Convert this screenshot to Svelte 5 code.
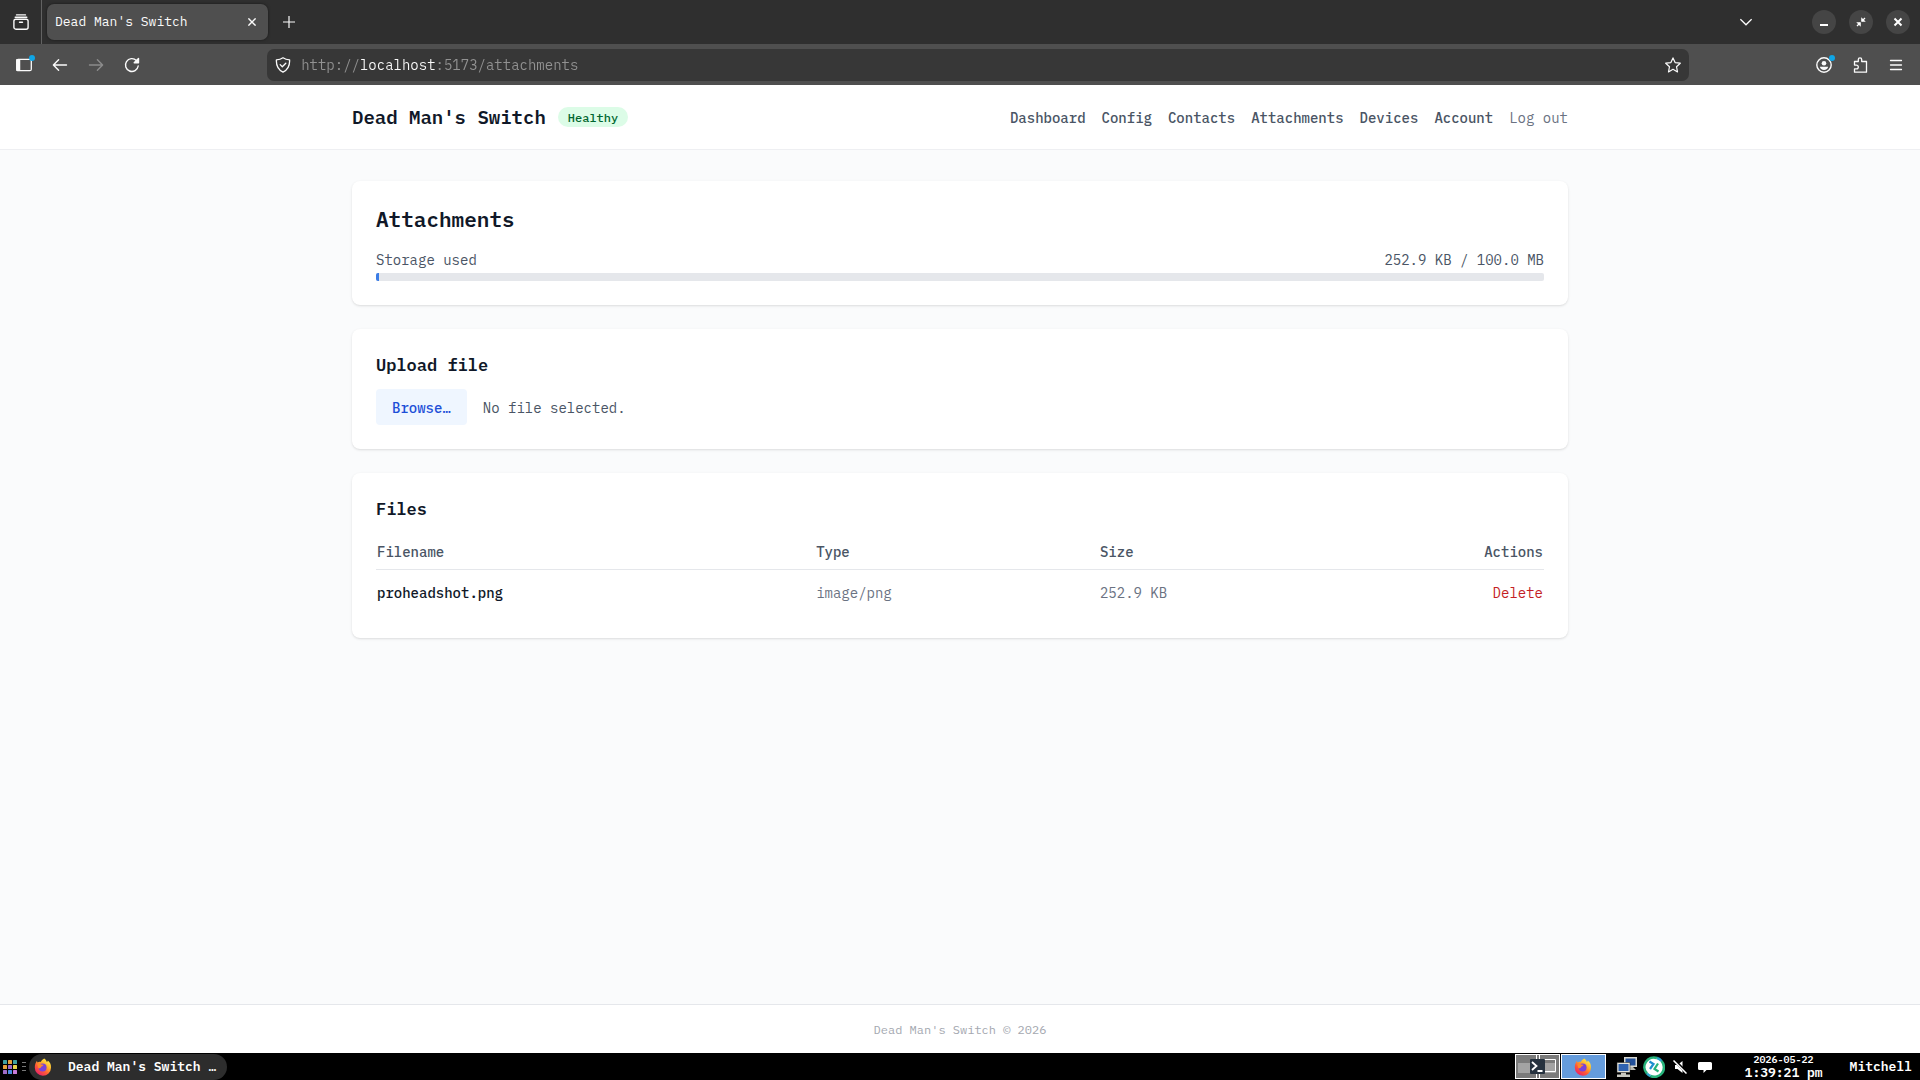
<script lang="ts">
  interface StoredFile {
    id: number;
    name: string;
    type: string;
    size: number;
  }

  const QUOTA = 100 * 1024 * 1024;

  const links = [
    "Dashboard",
    "Config",
    "Contacts",
    "Attachments",
    "Devices",
    "Account",
  ];

  // colours of the 3x3 launcher grid, row by row
  const launcher = [
    "#3fa0a0", "#e8a23a", "#3fa0a0",
    "#e8a23a", "#a06cc8", "#e8d44a",
    "#a06cc8", "#4a8ae0", "#c87ad8",
  ];

  let files = $state<StoredFile[]>([
    { id: 1, name: "proheadshot.png", type: "image/png", size: 258970 },
  ]);
  let picked = $state("");
  let address = $state("http://localhost:5173/attachments");

  const used = $derived(files.reduce((sum, f) => sum + f.size, 0));
  const percent = $derived((used / QUOTA) * 100);

  function formatSize(bytes: number) {
    if (bytes >= 1024 * 1024) return `${(bytes / 1024 / 1024).toFixed(1)} MB`;
    return `${(bytes / 1024).toFixed(1)} KB`;
  }

  function pick(e: Event) {
    const input = e.currentTarget as HTMLInputElement;
    picked = input.files?.[0]?.name ?? "";
  }

  function remove(id: number) {
    files = files.filter((f) => f.id !== id);
  }
</script>

{#snippet firefox()}
  <svg class="fox" width="18" height="18" viewBox="0 0 18 18" aria-hidden="true">
    <defs>
      <linearGradient id="fox-fire" x1="0.85" y1="0.05" x2="0.2" y2="0.95">
        <stop offset="0" stop-color="#fff14a" />
        <stop offset="0.35" stop-color="#ffb02a" />
        <stop offset="0.65" stop-color="#ff5a36" />
        <stop offset="1" stop-color="#e8206a" />
      </linearGradient>
    </defs>
    <path
      fill="url(#fox-fire)"
      d="M10.2 0.6c1.6 1 2.3 2.4 2.6 3.4 .7-.2 1-.8 1-1.4 2.300 1.700 3.400 4.200 3.200 7.200A8.100 8.100 0 0 1 .8 9.600C.8 6.900 1.600 4.600 3 2.800c0 .7.200 1.200.600 1.700 1-.7 2.200-.8 3.200-.5C7.400 2.500 8.600 1.600 10.200.6z"
    />
    <circle cx="8.6" cy="9.6" r="4" fill="#7a42d8" />
    <path
      fill="#ff8a2a"
      d="M3.400 6.200c1.400-.7 3-.4 4 .3l2 .2c.3.9-1 1.400-2 1.700-.4 1.600-1.800 2.200-3.200 1.600z"
    />
  </svg>
{/snippet}

<div class="screen">
  <header class="browser">
    <div class="tabstrip">
      <button class="icon view" aria-label="Recent browsing">
        <svg width="16" height="16" viewBox="0 0 16 16" fill="none" stroke="#fbfbfb" stroke-width="1.4" stroke-linecap="round">
          <path d="M3.500 .9h9M2.200 3.200h11.600" />
          <rect x="0.900" y="5.200" width="14.200" height="10" rx="2" />
          <path d="M6.500 8.300h3" />
        </svg>
      </button>
      <div class="tab">
        <span>Dead Man's Switch</span>
        <button class="icon" aria-label="Close tab">
          <svg width="8" height="8" viewBox="0 0 8 8" stroke="#fbfbfb" stroke-width="1.4">
            <path d="M.4.4l7.200 7.200M7.600.4L.4 7.600" />
          </svg>
        </button>
      </div>
      <button class="icon new" aria-label="New tab">
        <svg width="12" height="12" viewBox="0 0 12 12" stroke="#fbfbfb" stroke-width="1.200">
          <path d="M6 0v12M0 6h12" />
        </svg>
      </button>
      <button class="icon all" aria-label="List all tabs">
        <svg width="12" height="12" viewBox="0 0 12 12" fill="none" stroke="#fbfbfb" stroke-width="1.300">
          <path d="M.4 3.200L6 8.800l5.600-5.600" />
        </svg>
      </button>
      <div class="window-buttons">
        <button aria-label="Minimize">
          <svg width="10" height="10" viewBox="0 0 10 10"><path fill="#fff" d="M1 7h8v2H1z" /></svg>
        </button>
        <button aria-label="Restore">
          <svg width="10" height="10" viewBox="0 0 10 10" fill="#fff" stroke="#fff" stroke-width="1.300">
            <path d="M5.900 1.800v2.300h2.300zM4.100 8.200V5.900H1.800z" />
            <path d="M6 4l3-3M4 6L1 9" />
          </svg>
        </button>
        <button aria-label="Close window">
          <svg width="10" height="10" viewBox="0 0 10 10" stroke="#fff" stroke-width="2"><path d="M1.500 1.500l7 7M8.500 1.500l-7 7" /></svg>
        </button>
      </div>
    </div>

    <div class="toolbar">
      <div class="tools">
        <button class="icon dot" aria-label="Sidebar">
          <svg width="16" height="16" viewBox="0 0 16 16" fill="none" stroke="#fbfbfb" stroke-width="1.300">
            <rect x="0.700" y="2.300" width="14.600" height="11.400" rx="1.500" />
            <path fill="#fbfbfb" d="M1 2.600h2.600v10.800H1z" />
          </svg>
        </button>
        <button class="icon" aria-label="Back">
          <svg width="16" height="16" viewBox="0 0 16 16" fill="none" stroke="#fbfbfb" stroke-width="1.400" stroke-linecap="round" stroke-linejoin="round">
            <path d="M14.500 8h-13M6.600 2.700L1.400 8l5.200 5.300" />
          </svg>
        </button>
        <button class="icon" aria-label="Forward" disabled>
          <svg width="16" height="16" viewBox="0 0 16 16" fill="none" stroke="#8c8c8c" stroke-width="1.400" stroke-linecap="round" stroke-linejoin="round">
            <path d="M1.500 8h13M9.400 2.700L14.600 8l-5.200 5.300" />
          </svg>
        </button>
        <button class="icon" aria-label="Reload">
          <svg width="16" height="16" viewBox="0 0 16 16" fill="none" stroke="#fbfbfb" stroke-width="1.400" stroke-linecap="round">
            <path d="M14.200 9A6.400 6.400 0 1 1 12.400 3.500L14 5" />
            <path fill="#fbfbfb" stroke-linejoin="round" d="M14.500 1.400v4.300h-4.300z" />
          </svg>
        </button>
      </div>
      <div class="address">
        <svg width="16" height="16" viewBox="0 0 16 16" fill="none" stroke="#fbfbfb" stroke-width="1.300" stroke-linecap="round" stroke-linejoin="round" aria-hidden="true">
          <path d="M8 .8c1.800 1.300 4 2 6.600 2.100.3 5.200-1.500 9.800-6.600 12.300C2.900 12.700 1.100 8.100 1.400 2.900 4 2.800 6.200 2.100 8 .8z" />
          <path d="M5.200 7.600l2.100 2.100 3.500-3.500" />
        </svg>
        <input type="text" aria-label="Address" spellcheck="false" bind:value={address} />
        <button class="icon" aria-label="Bookmark this page">
          <svg width="16" height="16" viewBox="0 0 16 16" fill="none" stroke="#fbfbfb" stroke-width="1.200" stroke-linejoin="round">
            <path d="M8 .9l2.100 4.700 5.200.6-3.800 3.500 1 5.200L8 12.300l-4.500 2.600 1-5.200L.7 6.200l5.200-.6z" />
          </svg>
        </button>
      </div>
      <div class="tools">
        <button class="icon dot" aria-label="Profile">
          <svg width="16" height="16" viewBox="0 0 16 16" fill="none" stroke="#fbfbfb" stroke-width="1.400">
            <circle cx="8" cy="8" r="7.200" />
            <circle cx="8" cy="6.200" r="2.300" fill="#fbfbfb" stroke="none" />
            <path fill="#fbfbfb" stroke="none" d="M3.900 9.700h8.200c0 2-2 3.200-4.100 3.200s-4.100-1.200-4.100-3.200z" />
          </svg>
        </button>
        <button class="icon" aria-label="Extensions">
          <svg width="16" height="16" viewBox="0 0 16 16" fill="none" stroke="#fbfbfb" stroke-width="1.300" stroke-linejoin="round">
            <path d="M2.500 4.500h3.800V2.600a1.700 1.700 0 0 1 3.400 0v1.900h4.800v10.700h-12v-3.300h1.900a1.900 1.900 0 0 0 0-3.800H2.500z" />
          </svg>
        </button>
        <button class="icon" aria-label="Application menu">
          <svg width="16" height="16" viewBox="0 0 16 16" stroke="#fbfbfb" stroke-width="1.300" stroke-linecap="round">
            <path d="M2.500 3.500h11M2.500 8h11M2.500 12.500h11" />
          </svg>
        </button>
      </div>
    </div>
  </header>

  <div class="page">
    <div class="site-header">
      <div class="container bar">
        <div class="brand">
          <a class="title" href="/">Dead Man's Switch</a>
          <span class="badge">Healthy</span>
        </div>
        <nav>
          {#each links as link}
            <a href="/{link.toLowerCase()}">{link}</a>
          {/each}
          <button class="logout">Log out</button>
        </nav>
      </div>
    </div>

    <main class="container">
      <section class="card">
        <h1>Attachments</h1>
        <div class="usage">
          <span>Storage used</span>
          <span>{formatSize(used)} / {formatSize(QUOTA)}</span>
        </div>
        <div class="meter" role="progressbar" aria-label="Storage used" aria-valuenow={percent}>
          <div class="fill" style="width: {percent}%"></div>
        </div>
      </section>

      <section class="card">
        <h2>Upload file</h2>
        <label class="upload">
          <input type="file" onchange={pick} />
          <span class="browse">Browse…</span>
          <span class="picked">{picked || "No file selected."}</span>
        </label>
      </section>

      <section class="card">
        <h2 class="roomy">Files</h2>
        <table>
          <thead>
            <tr>
              <th class="name">Filename</th>
              <th class="type">Type</th>
              <th>Size</th>
              <th class="actions">Actions</th>
            </tr>
          </thead>
          <tbody>
            {#each files as file (file.id)}
              <tr>
                <td class="filename">{file.name}</td>
                <td>{file.type}</td>
                <td>{formatSize(file.size)}</td>
                <td class="actions">
                  <button class="delete" onclick={() => remove(file.id)}>Delete</button>
                </td>
              </tr>
            {/each}
          </tbody>
        </table>
      </section>
    </main>

    <footer>Dead Man's Switch © 2026</footer>
  </div>

  <div class="taskbar">
    <button class="icon" aria-label="Applications">
      <svg width="14" height="14" viewBox="0 0 14 14">
        {#each launcher as color, i}
          <rect x={(i % 3) * 5} y={Math.floor(i / 3) * 5} width="4" height="4" rx="0.500" fill={color} />
        {/each}
      </svg>
    </button>
    <svg class="grip" width="4" height="10" viewBox="0 0 4 10" stroke="#777" aria-hidden="true">
      <path d="M0 .5h4M0 4.500h4M0 8.500h4" />
    </svg>
    <button class="task">
      {@render firefox()}
      <span>Dead Man's Switch …</span>
    </button>

    <div class="tray">
      <div class="pager">
        <button class="desk" aria-label="Workspace 1">
          <svg width="42" height="23" viewBox="0 0 42 23">
            <path fill="#a3a3a3" d="M2 8h38v10H2z" />
            <path fill="none" stroke="#fff" d="M20.500 0v23M23.500 0v23M24 4.500h15.500v12H24" />
            <rect x="14" y="4" width="15" height="15" rx="1" fill="#26323f" />
            <path fill="none" stroke="#fff" stroke-width="1.800" d="M16 7l4.500 4-4.500 4M21.500 16h5" />
          </svg>
        </button>
        <button class="desk active" aria-label="Workspace 2">
          {@render firefox()}
        </button>
      </div>
      <div class="status">
        <svg width="22" height="20" viewBox="0 0 22 20" aria-hidden="true">
          <path fill="#d8d8d0" d="M8 0h13v10H8z" />
          <path fill="#22509a" d="M9.500 1.500h10v7h-10z" />
          <path fill="#b8b8b0" d="M12 10h5l3 3h-6z" />
          <path fill="#e4e4dc" stroke="#222" stroke-width="0.500" d="M1 5.500h13v10H1z" />
          <path fill="#2f62b0" d="M2.500 7h10v7h-10z" />
          <path fill="#c8c8c0" d="M5 15.800h5v1.700H5zM1 17.500h13V20H1z" />
        </svg>
        <svg width="22" height="22" viewBox="0 0 22 22" aria-hidden="true">
          <circle cx="11" cy="11" r="9.500" fill="#fff" />
          <path fill="none" stroke="#27b37b" stroke-width="2.600" d="M4 17.500A9.500 9.500 0 0 1 14 2M18.500 5A9.500 9.500 0 0 1 7.500 20" />
          <path fill="none" stroke="#2aa5c8" stroke-width="2.600" d="M14 2a9.500 9.500 0 0 1 4.500 3M7.500 20A9.500 9.500 0 0 1 4 17.500" />
          <path fill="none" stroke="#1f8fd0" stroke-width="2.200" d="M6.500 5.500l4 2.500-3.500 5" />
          <path fill="none" stroke="#27b37b" stroke-width="2.200" d="M15 7.500L11.500 13l4 2.500" />
        </svg>
        <svg width="20" height="14" viewBox="-3 0 20 14" aria-hidden="true">
          <path fill="#fff" d="M2 5h2.500L9.500 1v12L4.500 9H2z" />
          <path stroke="#000" stroke-width="3" d="M1.500.5l12 12" />
          <path stroke="#fff" stroke-width="1.500" d="M.5.5l13 13" />
        </svg>
        <svg width="20" height="14" viewBox="-3 0 20 14" aria-hidden="true">
          <path fill="#fff" d="M1.500 2h11A1.500 1.500 0 0 1 14 3.500v5a1.500 1.500 0 0 1-1.500 1.500H8.500L5.500 13v-3h-4A1.500 1.500 0 0 1 0 8.500v-5A1.500 1.500 0 0 1 1.500 2z" />
        </svg>
      </div>
      <div class="clock">
        <span class="date">2026-05-22</span>
        <span>1:39:21 pm</span>
      </div>
      <span class="user">Mitchell</span>
    </div>
  </div>
</div>

<style>
  :global(body) {
    margin: 0;
  }

  .screen {
    display: flex;
    flex-direction: column;
    min-height: 100vh;
    font-family: "IBM Plex Mono", "Liberation Mono", monospace;
    font-size: 14px;
    line-height: 20px;
  }

  button,
  input {
    font: inherit;
  }

  button {
    margin: 0;
    padding: 0;
    border: 0;
    background: none;
    color: inherit;
    cursor: pointer;
  }

  a {
    color: inherit;
    text-decoration: none;
  }

  svg {
    display: block;
    flex-shrink: 0;
  }

  .icon {
    display: flex;
    align-items: center;
    justify-content: center;
  }

  /* browser window */

  .tabstrip {
    display: flex;
    align-items: center;
    height: 44px;
    background: #2f2f2f;
    color: #fbfbfb;
  }

  .view {
    width: 42px;
    height: 44px;
    border-right: 1px solid #626262;
  }

  .tab {
    display: flex;
    align-items: center;
    justify-content: space-between;
    box-sizing: border-box;
    width: 221px;
    height: 36px;
    margin-left: 5px;
    padding: 0 12px 0 8px;
    border-radius: 7px;
    background: #4f4f4f;
    box-shadow: 0 0 3px rgba(0, 0, 0, 0.5);
    font-size: 13px;
  }

  .new {
    margin-left: 15px;
  }

  .all {
    margin-left: auto;
  }

  .window-buttons {
    display: flex;
    gap: 13px;
    margin: 0 10px 0 60px;
  }

  .window-buttons button {
    display: flex;
    align-items: center;
    justify-content: center;
    width: 24px;
    height: 24px;
    border-radius: 50%;
    background: #454545;
  }

  .toolbar {
    display: flex;
    align-items: center;
    justify-content: space-between;
    height: 41px;
    padding: 0 16px;
    background: #4f4f4f;
  }

  .tools {
    display: flex;
    gap: 20px;
  }

  .dot {
    position: relative;
  }

  .dot::after {
    content: "";
    position: absolute;
    top: -2px;
    right: -3px;
    width: 6px;
    height: 6px;
    border-radius: 50%;
    background: #0fa5e6;
  }

  .address {
    display: flex;
    align-items: center;
    gap: 10px;
    box-sizing: border-box;
    width: 75.3%;
    height: 32px;
    padding: 0 8px;
    border-radius: 7px;
    background: #373737;
  }

  /* only the host part of the address is drawn in white */
  .address input {
    flex: 1;
    min-width: 0;
    padding: 0;
    border: 0;
    outline: none;
    background: linear-gradient(
      to right,
      #929292 7ch,
      #fbfbfb 7ch,
      #fbfbfb 16ch,
      #929292 16ch
    );
    background-clip: text;
    -webkit-background-clip: text;
    color: transparent;
    caret-color: #fbfbfb;
  }

  /* page */

  .page {
    display: flex;
    flex: 1;
    flex-direction: column;
    background: #fafbfc;
    color: #4a5565;
  }

  .container {
    box-sizing: border-box;
    width: 100%;
    max-width: 1280px;
    margin: 0 auto;
    padding: 0 32px;
  }

  .site-header {
    border-bottom: 1px solid #eeeff2;
    background: #fff;
  }

  .bar {
    display: flex;
    align-items: center;
    justify-content: space-between;
    height: 64px;
  }

  .brand {
    display: flex;
    align-items: center;
    gap: 12px;
  }

  .title {
    color: #101828;
    font-size: 19px;
    font-weight: 600;
    line-height: 28px;
  }

  .badge {
    padding: 3px 10px 1px;
    border-radius: 10px;
    background: #dcfce7;
    color: #016630;
    font-size: 12px;
    font-weight: 500;
    line-height: 16px;
  }

  nav {
    display: flex;
    gap: 16px;
    padding-top: 2px;
    font-weight: 500;
  }

  .logout {
    color: #6a7282;
    font-weight: 400;
  }

  main {
    display: flex;
    flex: 1;
    flex-direction: column;
    gap: 24px;
  }

  main.container {
    padding-top: 31px;
    padding-bottom: 32px;
  }

  .card {
    padding: 24px;
    border-radius: 8px;
    background: #fff;
    box-shadow:
      0 1px 3px rgba(0, 0, 0, 0.1),
      0 1px 2px -1px rgba(0, 0, 0, 0.1);
  }

  h1,
  h2 {
    margin: 0;
    color: #101828;
    font-weight: 600;
  }

  h1 {
    margin-bottom: 16px;
    font-size: 21px;
    line-height: 28px;
  }

  h2 {
    margin-bottom: 12px;
    font-size: 17px;
    line-height: 24px;
  }

  h2.roomy {
    margin-bottom: 16px;
  }

  .usage {
    display: flex;
    justify-content: space-between;
    margin-bottom: 2px;
    line-height: 22px;
  }

  .meter {
    overflow: hidden;
    height: 8px;
    border-radius: 2px;
    background: #e5e7eb;
  }

  .fill {
    height: 100%;
    background: #3b7de6;
  }

  .upload {
    display: flex;
    align-items: baseline;
    gap: 16px;
    position: relative;
    cursor: pointer;
  }

  .upload input {
    position: absolute;
    width: 1px;
    height: 1px;
    opacity: 0;
  }

  .browse {
    padding: 9px 16px 7px;
    border-radius: 4px;
    background: #eff6ff;
    color: #1d4fd8;
    font-weight: 500;
  }

  table {
    width: 100%;
    border-spacing: 0;
    table-layout: fixed;
  }

  th,
  td {
    box-sizing: border-box;
    padding: 13px 1px 11px;
    text-align: left;
  }

  th {
    padding: 5px 1px 7px;
    border-bottom: 1px solid #e5e7eb;
    font-weight: 500;
  }

  td {
    color: #6a7282;
  }

  .name {
    width: 37.6%;
  }

  .type {
    width: 24.3%;
  }

  .actions {
    text-align: right;
  }

  .filename {
    color: #101828;
    font-weight: 500;
  }

  .delete {
    display: block;
    margin-left: auto;
    color: #c41e25;
  }

  footer {
    padding: 17px 16px 15px;
    border-top: 1px solid #e5e7eb;
    background: #fff;
    color: #a4a8b0;
    font-size: 12px;
    line-height: 16px;
    text-align: center;
  }

  /* desktop panel */

  .taskbar {
    display: flex;
    align-items: center;
    height: 27px;
    padding: 0 8px 0 3px;
    background: #000;
    color: #fff;
    font-size: 13px;
    font-weight: 600;
  }

  .grip {
    margin: 0 3px 0 5px;
  }

  .task {
    display: flex;
    align-items: center;
    gap: 16px;
    min-width: 198px;
    height: 26px;
    padding: 0 10px 0 5px;
    border-radius: 13px;
    background: #2d2d2d;
  }

  .tray {
    display: flex;
    align-items: center;
    gap: 10px;
    margin-left: auto;
  }

  .pager {
    display: flex;
    gap: 1px;
  }

  .desk {
    display: flex;
    align-items: center;
    justify-content: center;
    box-sizing: border-box;
    width: 45px;
    height: 25px;
    border: 1px solid #fff;
    background: #7b7b7b;
  }

  .desk.active {
    background: #659cdc;
  }

  .status {
    display: flex;
    align-items: center;
    gap: 5px;
  }

  .clock {
    display: flex;
    flex-direction: column;
    align-items: center;
    padding: 0 17px 0 20px;
    line-height: 14px;
  }

  .date {
    font-size: 10px;
    line-height: 12px;
  }
</style>
